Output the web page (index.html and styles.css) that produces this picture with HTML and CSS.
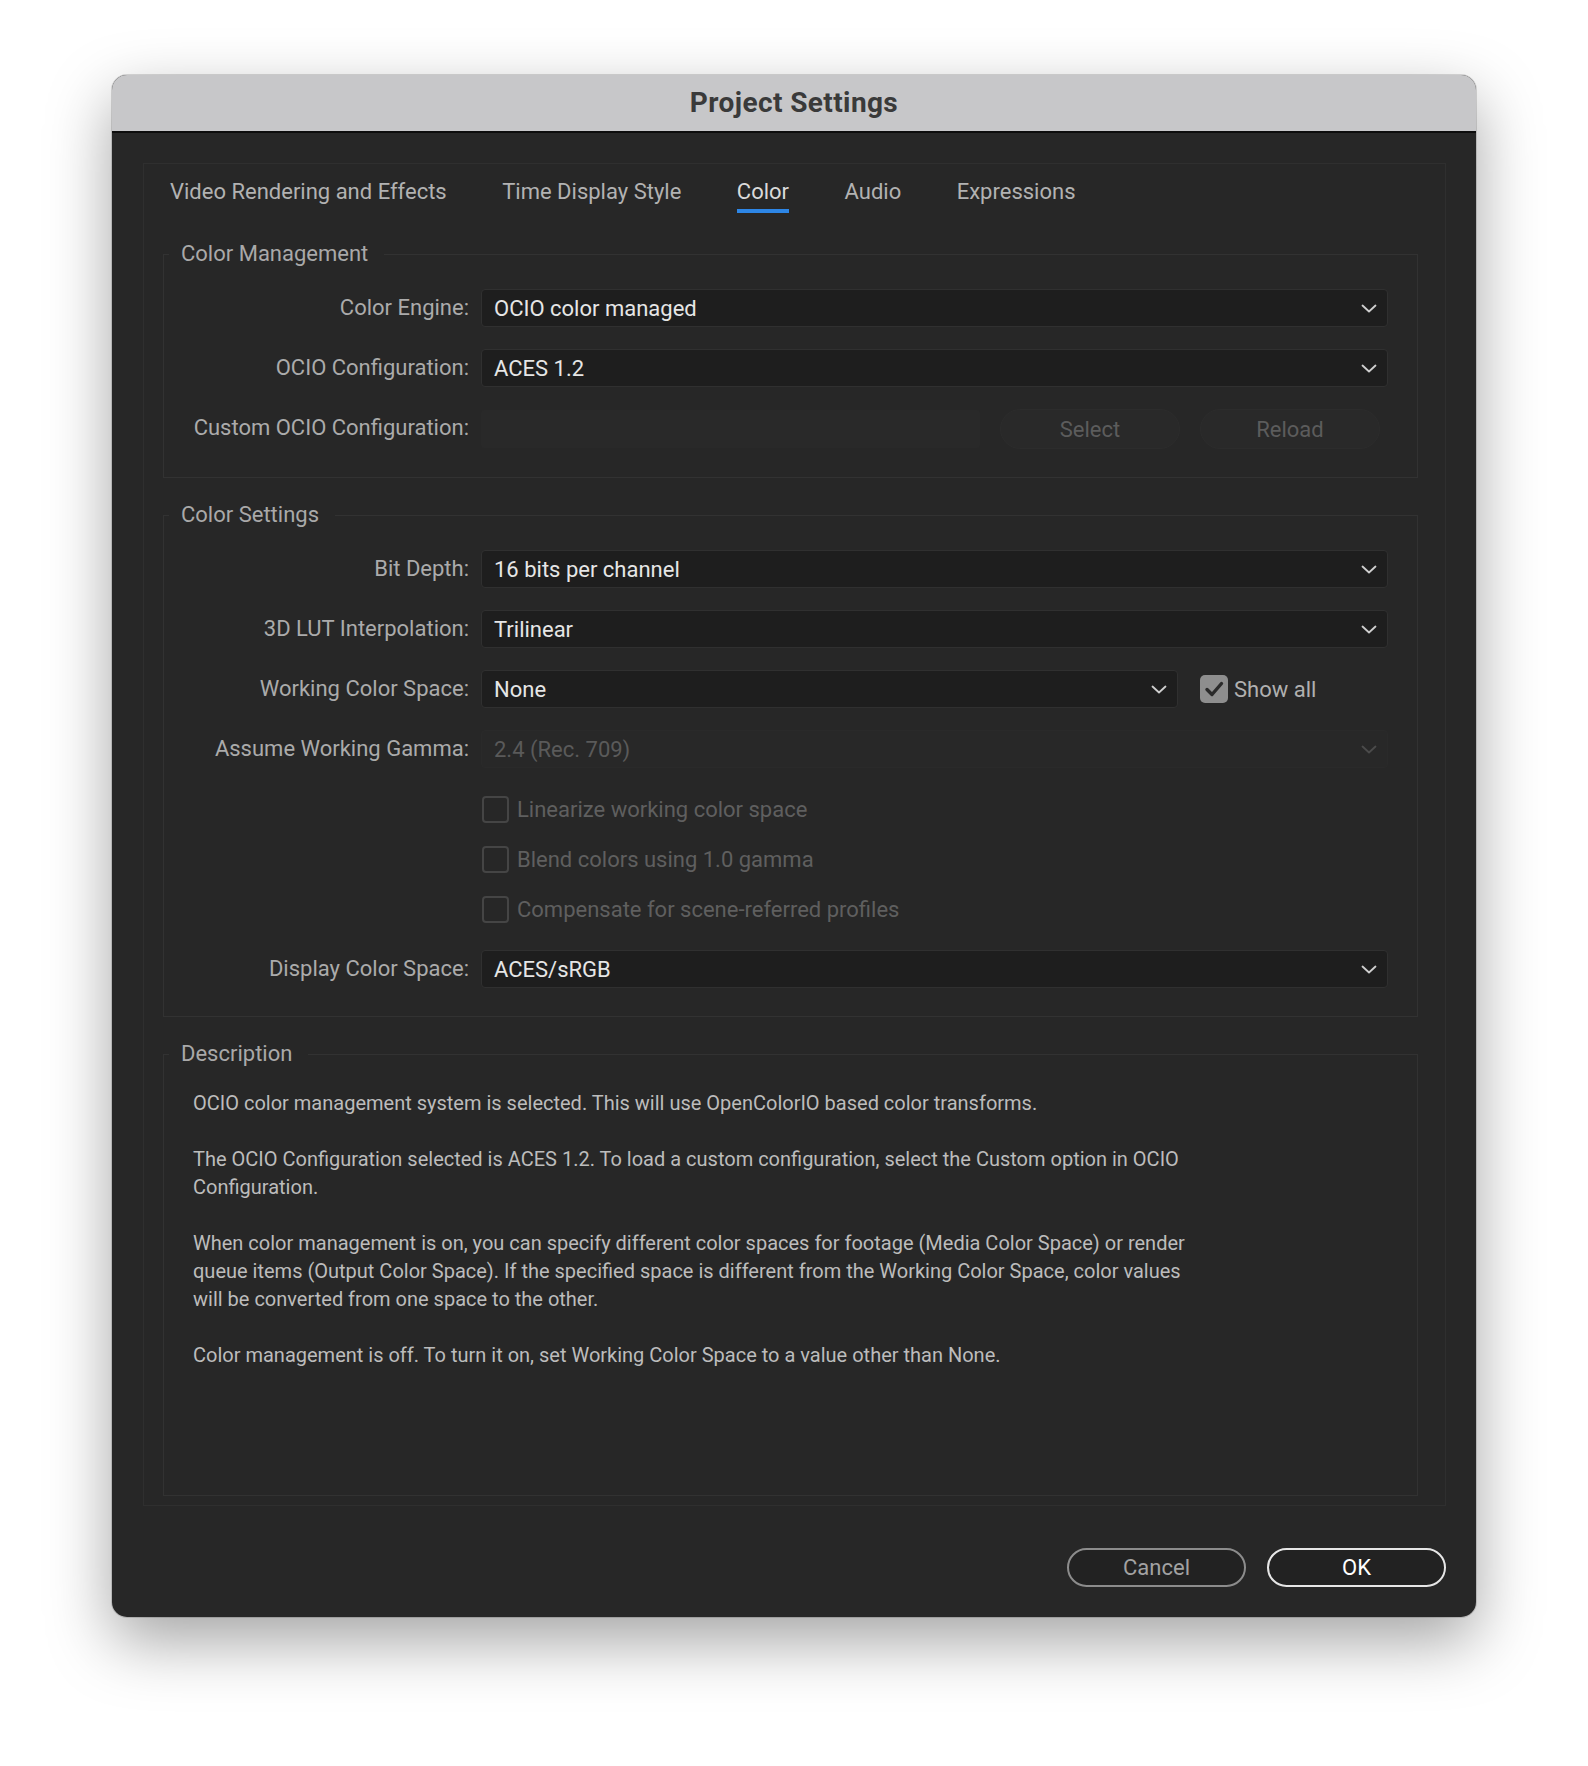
FILE: index.html
```html
<!DOCTYPE html>
<html lang="en">
<head>
<meta charset="utf-8">
<title>Project Settings</title>
<link rel="stylesheet" href="styles.css">
</head>
<body>
<div class="page">
  <div class="dialog">
    <div class="titlebar">Project Settings</div>
    <div class="dialog-body">
      <div class="panel">
        <div class="tabs">
          <span class="tab">Video Rendering and Effects</span>
          <span class="tab">Time Display Style</span>
          <span class="tab active">Color</span>
          <span class="tab">Audio</span>
          <span class="tab">Expressions</span>
        </div>

        <fieldset class="group">
          <legend>Color Management</legend>
          <div class="form">
            <span class="lbl">Color Engine:</span>
            <div class="select"><span>OCIO color managed</span><svg class="chev" viewBox="0 0 16 9"><polyline points="1.5,1.5 8,7.5 14.5,1.5"/></svg></div>

            <span class="lbl">OCIO Configuration:</span>
            <div class="select"><span>ACES 1.2</span><svg class="chev" viewBox="0 0 16 9"><polyline points="1.5,1.5 8,7.5 14.5,1.5"/></svg></div>

            <span class="lbl">Custom OCIO Configuration:</span>
            <div class="path-row">
              <div class="field"></div>
              <div class="ghost-btn">Select</div>
              <div class="ghost-btn">Reload</div>
            </div>
          </div>
        </fieldset>

        <fieldset class="group">
          <legend>Color Settings</legend>
          <div class="form">
            <span class="lbl">Bit Depth:</span>
            <div class="select"><span>16 bits per channel</span><svg class="chev" viewBox="0 0 16 9"><polyline points="1.5,1.5 8,7.5 14.5,1.5"/></svg></div>

            <span class="lbl">3D LUT Interpolation:</span>
            <div class="select"><span>Trilinear</span><svg class="chev" viewBox="0 0 16 9"><polyline points="1.5,1.5 8,7.5 14.5,1.5"/></svg></div>

            <span class="lbl">Working Color Space:</span>
            <div class="ws-row">
              <div class="select narrow"><span>None</span><svg class="chev" viewBox="0 0 16 9"><polyline points="1.5,1.5 8,7.5 14.5,1.5"/></svg></div>
              <span class="box-on"><svg viewBox="0 0 28 28"><polyline points="7,14.5 12,19.5 21.5,8.5"/></svg></span>
              <span class="show-all">Show all</span>
            </div>

            <span class="lbl">Assume Working Gamma:</span>
            <div class="select disabled"><span>2.4 (Rec. 709)</span><svg class="chev" viewBox="0 0 16 9"><polyline points="1.5,1.5 8,7.5 14.5,1.5"/></svg></div>

            <div class="checks">
              <div class="check-row"><span class="box"></span><span>Linearize working color space</span></div>
              <div class="check-row"><span class="box"></span><span>Blend colors using 1.0 gamma</span></div>
              <div class="check-row"><span class="box"></span><span>Compensate for scene-referred profiles</span></div>
            </div>

            <span class="lbl">Display Color Space:</span>
            <div class="select"><span>ACES/sRGB</span><svg class="chev" viewBox="0 0 16 9"><polyline points="1.5,1.5 8,7.5 14.5,1.5"/></svg></div>
          </div>
        </fieldset>

        <fieldset class="group grow">
          <legend>Description</legend>
          <div class="desc">
            <p>OCIO color management system is selected. This will use OpenColorIO based color transforms.</p>
            <p>The OCIO Configuration selected is ACES 1.2. To load a custom configuration, select the Custom option in OCIO<br>Configuration.</p>
            <p>When color management is on, you can specify different color spaces for footage (Media Color Space) or render<br>queue items (Output Color Space). If the specified space is different from the Working Color Space, color values<br>will be converted from one space to the other.</p>
            <p>Color management is off. To turn it on, set Working Color Space to a value other than None.</p>
          </div>
        </fieldset>
      </div>

      <div class="footer">
        <button class="btn cancel" type="button">Cancel</button>
        <button class="btn ok" type="button">OK</button>
      </div>
    </div>
  </div>
</div>
</body>
</html>
```
FILE: styles.css
```css
html, body {
  margin: 0;
  background: #ffffff;
}

body {
  font-family: Roboto, "Liberation Sans", sans-serif;
  font-size: 22px;
}

.page {
  padding: 75px 0 149px 112px;
}

.dialog {
  width: 1364px;
  height: 1542px;
  display: flex;
  flex-direction: column;
  background: #272727;
  border-radius: 15px;
  overflow: hidden;
  box-shadow: 0 24px 64px rgba(0, 0, 0, 0.36), 0 0 0 1px rgba(0, 0, 0, 0.14);
}

.titlebar {
  height: 56px;
  line-height: 56px;
  text-align: center;
  background: #c7c7c9;
  color: #3a3a3a;
  font-weight: 700;
  font-size: 28px;
  letter-spacing: 0.4px;
  border-bottom: 2px solid #0d0d0d;
  flex: none;
}

.dialog-body {
  flex: 1;
  display: flex;
  flex-direction: column;
  padding: 30px 30px 30px 31px;
  min-height: 0;
}

.panel {
  flex: 1;
  display: flex;
  flex-direction: column;
  border: 1px solid #2f2f2f;
  padding: 0 27px 9px 19px;
  min-height: 0;
}

.tabs {
  display: flex;
  gap: 55.5px;
  margin: 13px 0 26px 7px;
}

.tab {
  line-height: 30px;
  padding-bottom: 2px;
  border-bottom: 4px solid transparent;
  color: #b2b2b2;
}

.tab.active {
  color: #dadada;
  border-bottom-color: #2d86e6;
}

.group {
  margin: 0;
  padding: 0;
  border: 1px solid #323232;
  min-width: 0;
}

.group + .group {
  margin-top: 22px;
}

.group.grow {
  flex: 1;
}

.group legend {
  margin-left: 5px;
  padding: 0 16px 0 12px;
  line-height: 30px;
  color: #a9a9a9;
}

.form {
  display: grid;
  grid-template-columns: 305px 1fr;
  column-gap: 12px;
  row-gap: 22px;
  padding: 20px 29px 28px 0;
}

.lbl {
  text-align: right;
  line-height: 38px;
  color: #ababab;
  white-space: nowrap;
}

.select {
  display: flex;
  align-items: center;
  justify-content: space-between;
  height: 38px;
  box-sizing: border-box;
  background: #1e1e1e;
  border: 1px solid #303030;
  border-radius: 4px;
  padding: 0 10px 0 12px;
  color: #e6e6e6;
}

.chev {
  width: 16px;
  height: 9px;
  fill: none;
  stroke: #cfcfcf;
  stroke-width: 1.8;
  stroke-linecap: round;
  stroke-linejoin: round;
}

.select.disabled {
  background: #282828;
  border-color: #2a2a2a;
  color: #5a5a5a;
}

.select.disabled .chev {
  stroke: #4b4b4b;
}

.path-row {
  display: flex;
  align-items: center;
  gap: 20px;
  padding-right: 8px;
}

.field {
  flex: 1;
  height: 38px;
  background: #292929;
  border-radius: 3px;
}

.ghost-btn {
  width: 180px;
  height: 40px;
  box-sizing: border-box;
  border-radius: 20px;
  background: #292929;
  border: 1px solid #2c2c2c;
  color: #5c5c5c;
  display: flex;
  align-items: center;
  justify-content: center;
}

.ws-row {
  display: flex;
  align-items: center;
}

.select.narrow {
  width: 697px;
  flex: none;
}

.box-on {
  width: 28px;
  height: 28px;
  margin-left: 22px;
  border-radius: 5px;
  background: #8e8e8e;
  display: flex;
}

.box-on svg {
  width: 28px;
  height: 28px;
  fill: none;
  stroke: #2a2a2a;
  stroke-width: 3.4;
  stroke-linecap: round;
  stroke-linejoin: round;
}

.show-all {
  margin-left: 6px;
  color: #b0b0b0;
}

.checks {
  grid-column: 2;
  display: flex;
  flex-direction: column;
  gap: 12px;
}

.check-row {
  height: 38px;
  display: flex;
  align-items: center;
  gap: 8px;
  padding-left: 1px;
  color: #5f5f5f;
}

.box {
  width: 27px;
  height: 27px;
  box-sizing: border-box;
  border: 2px solid #454545;
  border-radius: 4px;
}

.desc {
  padding: 20px 29px 0 29px;
  font-size: 20px;
  line-height: 28px;
  color: #bcbcbc;
}

.desc p {
  margin: 0 0 28px;
  white-space: nowrap;
}

.footer {
  display: flex;
  justify-content: flex-end;
  gap: 21px;
  margin-top: 42px;
  flex: none;
}

.btn {
  width: 179px;
  height: 39px;
  box-sizing: border-box;
  border-radius: 20px;
  background: #222222;
  font-family: inherit;
  font-size: 22px;
  padding: 0;
}

.btn.cancel {
  border: 2px solid #8c8c8c;
  color: #a2a2a2;
}

.btn.ok {
  border: 2px solid #e6e6e6;
  color: #ffffff;
}
```
